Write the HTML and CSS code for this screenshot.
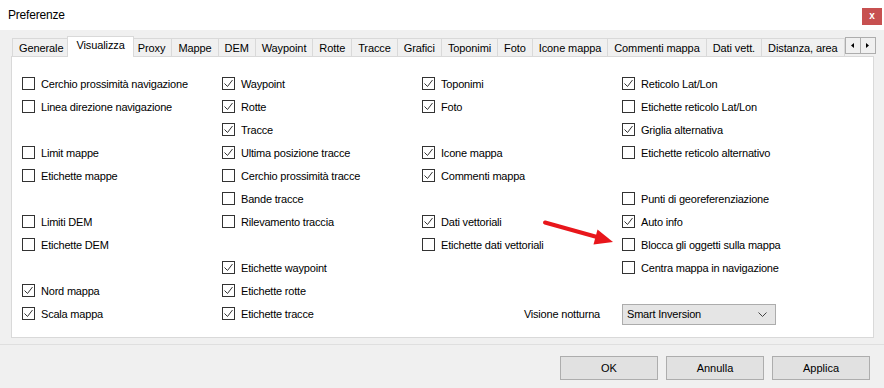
FILE: index.html
```html
<!DOCTYPE html>
<html lang="it">
<head>
<meta charset="utf-8">
<title>Preferenze</title>
<link rel="stylesheet" href="styles.css">
</head>
<body>
<div class="window">
  <div class="titlebar">
    <span class="title">Preferenze</span>
    <span class="close">x</span>
  </div>
  <div class="tabstrip">
    <div class="tab">Generale</div>
    <div class="tab active">Visualizza</div>
    <div class="tab">Proxy</div>
    <div class="tab">Mappe</div>
    <div class="tab">DEM</div>
    <div class="tab">Waypoint</div>
    <div class="tab">Rotte</div>
    <div class="tab">Tracce</div>
    <div class="tab">Grafici</div>
    <div class="tab">Toponimi</div>
    <div class="tab">Foto</div>
    <div class="tab">Icone mappa</div>
    <div class="tab">Commenti mappa</div>
    <div class="tab">Dati vett.</div>
    <div class="tab">Distanza, area</div>
    <div class="scroller">
      <span class="sbtn"><svg width="3" height="5" viewBox="0 0 3 5"><polygon points="3,0 0,2.5 3,5" fill="#000"/></svg></span>
      <span class="sbtn"><svg width="3" height="5" viewBox="0 0 3 5"><polygon points="0,0 3,2.5 0,5" fill="#000"/></svg></span>
    </div>
  </div>
  <div class="panel">
    <div class="grid">
      <!-- column 1 -->
      <label class="cb"><span class="box"></span>Cerchio prossimità navigazione</label>
      <label class="cb"><span class="box"></span>Linea direzione navigazione</label>
      <span class="empty"></span>
      <label class="cb"><span class="box"></span>Limit mappe</label>
      <label class="cb"><span class="box"></span>Etichette mappe</label>
      <span class="empty"></span>
      <label class="cb"><span class="box"></span>Limiti DEM</label>
      <label class="cb"><span class="box"></span>Etichette DEM</label>
      <span class="empty"></span>
      <label class="cb"><span class="box on"><svg viewBox="0 0 11 11" width="11" height="11"><polyline points="1.5,5.5 4.5,8.5 9.5,2" fill="none" stroke="#333" stroke-width="1"/></svg></span>Nord mappa</label>
      <label class="cb"><span class="box on"><svg viewBox="0 0 11 11" width="11" height="11"><polyline points="1.5,5.5 4.5,8.5 9.5,2" fill="none" stroke="#333" stroke-width="1"/></svg></span>Scala mappa</label>
      <!-- column 2 -->
      <label class="cb"><span class="box on"><svg viewBox="0 0 11 11" width="11" height="11"><polyline points="1.5,5.5 4.5,8.5 9.5,2" fill="none" stroke="#333" stroke-width="1"/></svg></span>Waypoint</label>
      <label class="cb"><span class="box on"><svg viewBox="0 0 11 11" width="11" height="11"><polyline points="1.5,5.5 4.5,8.5 9.5,2" fill="none" stroke="#333" stroke-width="1"/></svg></span>Rotte</label>
      <label class="cb"><span class="box on"><svg viewBox="0 0 11 11" width="11" height="11"><polyline points="1.5,5.5 4.5,8.5 9.5,2" fill="none" stroke="#333" stroke-width="1"/></svg></span>Tracce</label>
      <label class="cb"><span class="box on"><svg viewBox="0 0 11 11" width="11" height="11"><polyline points="1.5,5.5 4.5,8.5 9.5,2" fill="none" stroke="#333" stroke-width="1"/></svg></span>Ultima posizione tracce</label>
      <label class="cb"><span class="box"></span>Cerchio prossimità tracce</label>
      <label class="cb"><span class="box"></span>Bande tracce</label>
      <label class="cb"><span class="box"></span>Rilevamento traccia</label>
      <span class="empty"></span>
      <label class="cb"><span class="box on"><svg viewBox="0 0 11 11" width="11" height="11"><polyline points="1.5,5.5 4.5,8.5 9.5,2" fill="none" stroke="#333" stroke-width="1"/></svg></span>Etichette waypoint</label>
      <label class="cb"><span class="box on"><svg viewBox="0 0 11 11" width="11" height="11"><polyline points="1.5,5.5 4.5,8.5 9.5,2" fill="none" stroke="#333" stroke-width="1"/></svg></span>Etichette rotte</label>
      <label class="cb"><span class="box on"><svg viewBox="0 0 11 11" width="11" height="11"><polyline points="1.5,5.5 4.5,8.5 9.5,2" fill="none" stroke="#333" stroke-width="1"/></svg></span>Etichette tracce</label>
      <!-- column 3 -->
      <label class="cb"><span class="box on"><svg viewBox="0 0 11 11" width="11" height="11"><polyline points="1.5,5.5 4.5,8.5 9.5,2" fill="none" stroke="#333" stroke-width="1"/></svg></span>Toponimi</label>
      <label class="cb"><span class="box on"><svg viewBox="0 0 11 11" width="11" height="11"><polyline points="1.5,5.5 4.5,8.5 9.5,2" fill="none" stroke="#333" stroke-width="1"/></svg></span>Foto</label>
      <span class="empty"></span>
      <label class="cb"><span class="box on"><svg viewBox="0 0 11 11" width="11" height="11"><polyline points="1.5,5.5 4.5,8.5 9.5,2" fill="none" stroke="#333" stroke-width="1"/></svg></span>Icone mappa</label>
      <label class="cb"><span class="box on"><svg viewBox="0 0 11 11" width="11" height="11"><polyline points="1.5,5.5 4.5,8.5 9.5,2" fill="none" stroke="#333" stroke-width="1"/></svg></span>Commenti mappa</label>
      <span class="empty"></span>
      <label class="cb"><span class="box on"><svg viewBox="0 0 11 11" width="11" height="11"><polyline points="1.5,5.5 4.5,8.5 9.5,2" fill="none" stroke="#333" stroke-width="1"/></svg></span>Dati vettoriali</label>
      <label class="cb"><span class="box"></span>Etichette dati vettoriali</label>
      <span class="empty"></span>
      <span class="empty"></span>
      <span class="fieldlabel">Visione notturna</span>
      <!-- column 4 -->
      <label class="cb"><span class="box on"><svg viewBox="0 0 11 11" width="11" height="11"><polyline points="1.5,5.5 4.5,8.5 9.5,2" fill="none" stroke="#333" stroke-width="1"/></svg></span>Reticolo Lat/Lon</label>
      <label class="cb"><span class="box"></span>Etichette reticolo Lat/Lon</label>
      <label class="cb"><span class="box on"><svg viewBox="0 0 11 11" width="11" height="11"><polyline points="1.5,5.5 4.5,8.5 9.5,2" fill="none" stroke="#333" stroke-width="1"/></svg></span>Griglia alternativa</label>
      <label class="cb"><span class="box"></span>Etichette reticolo alternativo</label>
      <span class="empty"></span>
      <label class="cb"><span class="box"></span>Punti di georeferenziazione</label>
      <label class="cb"><span class="box on"><svg viewBox="0 0 11 11" width="11" height="11"><polyline points="1.5,5.5 4.5,8.5 9.5,2" fill="none" stroke="#333" stroke-width="1"/></svg></span>Auto info</label>
      <label class="cb"><span class="box"></span>Blocca gli oggetti sulla mappa</label>
      <label class="cb"><span class="box"></span>Centra mappa in navigazione</label>
      <span class="empty"></span>
      <div class="select">
        <span>Smart Inversion</span>
        <svg width="9" height="5" viewBox="0 0 9 5"><polyline points="0.5,0.5 4.5,4.5 8.5,0.5" fill="none" stroke="#444" stroke-width="1"/></svg>
      </div>
    </div>
  </div>
  <div class="footer">
    <button class="btn">OK</button>
    <button class="btn">Annulla</button>
    <button class="btn">Applica</button>
  </div>
  <svg class="arrow" width="884" height="388" viewBox="0 0 884 388">
    <line x1="545" y1="222.5" x2="597" y2="237" stroke="#e8161b" stroke-width="4" stroke-linecap="round"/>
    <polygon points="613,242 593.5,244.5 597.5,229.5" fill="#e8161b"/>
  </svg>
</div>
</body>
</html>
```

FILE: styles.css
```css
* { box-sizing: border-box; }
html, body { margin: 0; padding: 0; }
body {
  font-family: "Segoe UI", "Liberation Sans", Arial, sans-serif;
  font-size: 11px;
  letter-spacing: -0.2px;
  color: #000;
  background: #f0f0f0;
}
.window {
  position: relative;
  width: 884px;
  height: 388px;
  background: #f0f0f0;
  overflow: hidden;
}
.titlebar {
  height: 30px;
  background: #fff;
  display: flex;
  align-items: flex-start;
}
.title {
  padding-left: 8px;
  line-height: 30px;
  font-size: 12px;
}
.close {
  margin-left: auto;
  margin-right: 2px;
  margin-top: 8px;
  width: 20px;
  height: 17px;
  background: #c75050;
  color: #fff;
  font-weight: bold;
  font-size: 10px;
  line-height: 16px;
  text-align: center;
}
.tabstrip {
  margin-top: 6px;
  height: 20px;
  padding-left: 12px;
  padding-right: 10px;
  display: flex;
  align-items: flex-end;
}
.tab {
  flex: none;
  height: 18px;
  padding: 0 6px;
  line-height: 18px;
  letter-spacing: -0.1px;
  border: 1px solid #d9d9d9;
  border-bottom: none;
  margin-left: -1px;
  background: #f0f0f0;
  white-space: nowrap;
}
.tab:first-child { margin-left: 0; }
.tab.active {
  position: relative;
  z-index: 2;
  height: 21px;
  margin: 0 -2px -1px -3px;
  padding: 0 8px 3px;
  background: #fff;
  line-height: 16px;
}
.scroller {
  flex: none;
  margin-left: auto;
  align-self: flex-start;
  margin-top: 1px;
  display: flex;
}
.sbtn {
  width: 16px;
  height: 17px;
  border: 1px solid #adadad;
  background: #f0f0f0;
  display: flex;
  align-items: center;
  justify-content: center;
}
.sbtn + .sbtn { margin-left: -1px; }
.panel {
  margin: 0 10px 0 11px;
  height: 282px;
  background: #fff;
  border: 1px solid #d9d9d9;
  padding: 15px 0 0 10px;
}
.grid {
  display: grid;
  grid-template-columns: repeat(4, 200px);
  grid-template-rows: repeat(11, 23px);
  grid-auto-flow: column;
}
.cb {
  display: flex;
  align-items: center;
  white-space: nowrap;
}
.box {
  width: 13px;
  height: 13px;
  border: 1px solid #333;
  background: #fff;
  margin-right: 6px;
  flex: none;
  display: flex;
}
.fieldlabel {
  display: flex;
  align-items: center;
  justify-content: flex-end;
  padding-right: 22px;
}
.select {
  align-self: center;
  width: 154px;
  height: 21px;
  margin-top: 1px;
  background: #e5e5e5;
  border: 1px solid #acacac;
  display: flex;
  align-items: center;
  justify-content: space-between;
  padding: 0 8px 0 4px;
}
.footer {
  margin-top: 6px;
  border-top: 1px solid #dfdfdf;
  padding: 11px 14px 0 0;
  display: flex;
  justify-content: flex-end;
  gap: 8px;
}
.btn {
  width: 98px;
  height: 24px;
  background: #e1e1e1;
  border: 1px solid #adadad;
  font: inherit;
  color: #000;
  padding: 0;
}
.arrow {
  position: absolute;
  left: 0;
  top: 0;
  pointer-events: none;
}
```
